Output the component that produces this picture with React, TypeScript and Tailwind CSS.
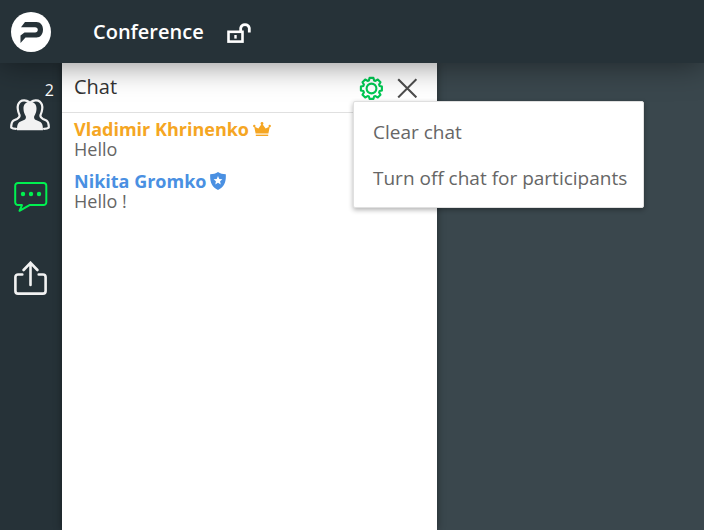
import React from "react";
import clsx from "clsx";

type Role = "owner" | "moderator";

interface Message {
  id: number;
  author: string;
  role: Role;
  text: string;
}

const messages: Message[] = [
  { id: 1, author: "Vladimir Khrinenko", role: "owner", text: "Hello" },
  { id: 2, author: "Nikita Gromko", role: "moderator", text: "Hello !" },
];

const menuItems = ["Clear chat", "Turn off chat for participants"];

function LogoIcon() {
  return (
    <svg width="40" height="40" viewBox="0 0 40 40" aria-hidden="true">
      <circle cx="20" cy="20" r="20" fill="#fff" />
      <path
        d="M14 10H25.5C29.5 10 32 13.2 32 17.5C32 22 29.5 25.5 25.5 25.5H14.5L9.5 31V23.5L13.5 20.5H24C25.8 20.5 26.8 19.4 26.8 17.8C26.8 16 25.8 15.2 24 15.2H10Z"
        fill="#263238"
      />
    </svg>
  );
}

function UnlockIcon() {
  return (
    <svg width="24" height="22" viewBox="0 0 24 22" fill="none" stroke="#fff" aria-hidden="true">
      <rect x="1.5" y="10.8" width="14" height="9.8" strokeWidth="2.6" />
      <path d="M13.7 10.4V7a4.4 4.4 0 0 1 8.6 0V11.6" strokeWidth="2.8" />
      <path d="M8.5 14v3.6" strokeWidth="2.4" />
    </svg>
  );
}

function PeopleIcon() {
  return (
    <svg width="40" height="32" viewBox="0 0 40 32" aria-hidden="true">
      <g fill="none" stroke="#f2f2f2" strokeWidth="2.2" strokeLinejoin="round" strokeLinecap="round">
        <path d="M19 3C16.3 1 12.3 .9 10.2 2.6C8 4.4 7.4 7.2 7.8 10.2C8.1 13 9 15 9.6 16.2C9.8 18.2 8.8 19 7 19.9L3.6 21.5C1.8 22.6 1.2 24.5 1.2 28.6C2.2 29.3 4 29.7 6 29.8" />
        <path d="M21 3C23.7 1 27.7 .9 29.8 2.6C32 4.4 32.6 7.2 32.2 10.2C31.9 13 31 15 30.4 16.2C30.2 18.2 31.2 19 33 19.9L36.4 21.5C38.2 22.6 38.8 24.5 38.8 28.6C37.8 29.3 36 29.7 34 29.8" />
      </g>
      <path
        d="M20 2.8C24.3 2.8 26.7 5.8 26.5 10C26.4 13 25.3 15.5 24.2 17.2C23.8 19.2 24.3 20.2 26 21L30 22.8C32.3 24 33 26.5 33 31.3H7C7 26.5 7.7 24 10 22.8L14 21C15.7 20.2 16.2 19.2 15.8 17.2C14.7 15.5 13.6 13 13.5 10C13.3 5.8 15.7 2.8 20 2.8Z"
        fill="#f2f2f2"
      />
    </svg>
  );
}

function ChatIcon() {
  return (
    <svg width="34" height="32" viewBox="0 0 34 32" aria-hidden="true">
      <path
        d="M4 2H29.5A2.8 2.8 0 0 1 32.3 4.8V21.3A2.8 2.8 0 0 1 29.5 24.1H15.5L5.5 29.8L8 24.1H4A2.8 2.8 0 0 1 1.2 21.3V4.8A2.8 2.8 0 0 1 4 2Z"
        fill="none"
        stroke="#00f050"
        strokeWidth="2"
        strokeLinejoin="round"
      />
      <circle cx="9" cy="13" r="2.2" fill="#00f050" />
      <circle cx="17" cy="13" r="2.2" fill="#00f050" />
      <circle cx="25" cy="13" r="2.2" fill="#00f050" />
    </svg>
  );
}

function ShareIcon() {
  return (
    <svg
      width="34"
      height="34"
      viewBox="0 0 34 34"
      fill="none"
      stroke="#f2f2f2"
      strokeWidth="2.6"
      strokeLinecap="round"
      aria-hidden="true"
    >
      <path d="M8.3 13.5H4A2.6 2.6 0 0 0 1.4 16.1V30A2.6 2.6 0 0 0 4 32.6H29A2.6 2.6 0 0 0 31.6 30V16.1A2.6 2.6 0 0 0 29 13.5H24.7" />
      <path d="M16.5 24V1.8M9.6 9L16.5 1.8L23.4 9" />
    </svg>
  );
}

function GearIcon() {
  return (
    <svg
      width="24"
      height="24"
      viewBox="-12.5 -12.5 24 24"
      fill="none"
      stroke="#00c853"
      strokeWidth="2.1"
      strokeLinejoin="round"
      aria-hidden="true"
    >
      <path d="M-2.6-8.1L-1.9-10.6H1.9L2.6-8.1L3.9-7.6L6.3-9L9-6.3L7.6-3.9L8.1-2.6L10.4-1.9V1.9L8.1 2.6L7.6 3.9L9 6.3L6.3 9L3.9 7.6L2.6 8.1L1.9 10.4H-1.9L-2.6 8.1L-3.9 7.6L-6.3 9L-9 6.3L-7.6 3.9L-8.1 2.6L-10.6 1.9V-1.9L-8.1-2.6L-7.6-3.9L-9-6.3L-6.3-9L-3.9-7.6Z" />
      <circle r="4.9" />
    </svg>
  );
}

function CloseIcon() {
  return (
    <svg width="20" height="20" viewBox="0 0 20 20" stroke="#4d4d4d" strokeWidth="2.1" aria-hidden="true">
      <path d="M1.2 1.2L19.4 19.4M19.4 1.2L1.2 19.4" />
    </svg>
  );
}

function RoleIcon({ role }: { role: Role }) {
  if (role === "owner") {
    return (
      <svg width="18" height="14" viewBox="0 0 18 14" fill="#f5a623" aria-label="Owner">
        <path d="M2.6 11.4L1.2 4.6L5.4 6.6L9 1.4L12.6 6.6L16.8 4.6L15.4 11.4Z" />
        <circle cx="9" cy="1.5" r="1.4" />
        <circle cx="1.3" cy="4" r="1.2" />
        <circle cx="16.7" cy="4" r="1.2" />
        <path d="M2.8 12.6H15.2V14H2.8Z" />
      </svg>
    );
  }
  return (
    <svg width="16" height="18" viewBox="0 0 16 18" aria-label="Moderator">
      <path
        d="M8 0C10.2 1.5 12.8 2.2 15.8 2.2C16.2 9 14.8 14.8 8 18C1.2 14.8-.2 9 .2 2.2C3.2 2.2 5.8 1.5 8 0Z"
        fill="#4a90e2"
      />
      <path
        d="M8 4L9.3 6.9L12.4 7.2L10.1 9.3L10.7 12.4L8 10.8L5.3 12.4L5.9 9.3L3.6 7.2L6.7 6.9Z"
        fill="#fff"
      />
    </svg>
  );
}

function Header() {
  return (
    <header className="relative z-20 flex h-[63px] items-center bg-[#263238] pl-[11px] shadow-[0_0_32px_rgba(0,0,0,0.5)]">
      <a href="#home" aria-label="Home">
        <LogoIcon />
      </a>
      <h1 className="ml-[42px] text-xl font-semibold text-white">Conference</h1>
      <button type="button" aria-label="Unlock room" className="ml-[23px]">
        <UnlockIcon />
      </button>
    </header>
  );
}

function Sidebar() {
  return (
    <nav className="flex w-[62px] shrink-0 flex-col items-center bg-[#263238] pt-[18px]">
      <button type="button" aria-label="Participants" className="flex w-full flex-col items-center pr-0.5">
        <span className="self-end pr-1.5 text-base leading-[18px] text-white">2</span>
        <PeopleIcon />
      </button>
      <button type="button" aria-label="Chat" className="mt-[50px]">
        <ChatIcon />
      </button>
      <button type="button" aria-label="Share" className="mt-12">
        <ShareIcon />
      </button>
    </nav>
  );
}

function SettingsMenu() {
  return (
    <div
      role="menu"
      className="absolute -left-1.5 top-[25px] z-30 w-max rounded-xs border border-[#e0e0e0] bg-white pt-[7px] pb-1.5 shadow-[0_2px_5px_rgba(0,0,0,0.3)]"
    >
      {menuItems.map((item) => (
        <button
          key={item}
          type="button"
          role="menuitem"
          className="block w-full pr-4 pl-[19px] text-left text-[19px] leading-[46px] text-[#666]"
        >
          {item}
        </button>
      ))}
    </div>
  );
}

function ChatPanel() {
  return (
    <section className="z-10 w-[375px] shrink-0 bg-white shadow-[0_0_8px_rgba(0,0,0,0.4)]">
      <div className="flex h-[50px] items-center border-b border-[#e0e0e0] px-3">
        <h2 className="flex-1 pb-0.5 text-xl font-medium text-[#333]">Chat</h2>
        <div className="relative z-30 mr-3.5 flex">
          <button type="button" aria-label="Chat settings">
            <GearIcon />
          </button>
          <SettingsMenu />
        </div>
        <button type="button" aria-label="Close chat" className="mr-2">
          <CloseIcon />
        </button>
      </div>
      <ul className="flex flex-col gap-3 px-3 pt-1.5">
        {messages.map((message) => (
          <li key={message.id}>
            <div
              className={clsx(
                "flex items-center gap-1 text-lg leading-5 font-bold",
                message.role === "owner" ? "text-[#f5a623]" : "text-[#4a90e2]"
              )}
            >
              {message.author}
              <RoleIcon role={message.role} />
            </div>
            <p className="text-lg leading-5 text-[#666]">{message.text}</p>
          </li>
        ))}
      </ul>
    </section>
  );
}

export default function App() {
  return (
    <div className="flex min-h-screen flex-col bg-[#3a474d] font-['Open_Sans',sans-serif]">
      <Header />
      <div className="flex flex-1">
        <Sidebar />
        <ChatPanel />
        <main className="flex-1" />
      </div>
    </div>
  );
}
